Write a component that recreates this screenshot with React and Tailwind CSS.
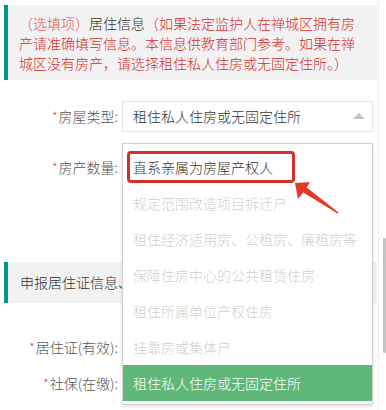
import React from "react";

const font = { fontFamily: '"Noto Sans CJK SC", "Noto Sans", sans-serif' };

const options = [
  { text: "直系亲属为房屋产权人", state: "normal" },
  { text: "规定范围改造项目拆迁户", state: "disabled" },
  { text: "租住经济适用房、公租房、廉租房等", state: "disabled" },
  { text: "保障住房中心的公共租赁住房", state: "disabled" },
  { text: "租住所属单位产权住房", state: "disabled" },
  { text: "挂靠房或集体户", state: "disabled" },
  { text: "租住私人住房或无固定住所", state: "selected" },
];

function Label({ children }) {
  return (
    <div className="w-[118px] shrink-0 text-right text-[14px] text-[#555] whitespace-nowrap">
      <span className="text-[#e4393c] text-[12px] mr-[1px] relative -top-[1px]">*</span>
      {children}
    </div>
  );
}

function Dropdown() {
  return (
    <div className="absolute left-0 top-[42px] w-[251px] h-[262px] border border-[#d2d2d2] bg-white shadow-[0_2px_4px_rgba(0,0,0,0.12)] pt-[5px] z-10">
      {options.map((o) => (
        <div
          key={o.text}
          className={
            o.state === "selected"
              ? "h-[36px] px-[10px] flex items-center bg-[#5fb878] text-white text-[14px]"
              : o.state === "disabled"
              ? "h-[36px] px-[10px] flex items-center text-[#d0d0d0] text-[14px]"
              : "h-[36px] px-[10px] flex items-center text-[#333] text-[14px]"
          }
        >
          {o.text}
        </div>
      ))}
      <div className="absolute left-[4px] top-[7px] w-[168px] h-[32px] border-[3px] border-[#cf3328] rounded-[4px]" />
    </div>
  );
}

export default function App() {
  return (
    <div className="relative w-[386px] h-[410px] overflow-hidden bg-white flex font-light" style={font}>
      <div className="w-[378px] shrink-0 pt-[5px]">
        <div className="ml-[4px] w-[373px] border-l-4 border-[#009688] bg-[#f2f2f2] pl-[11px] pr-[15px] pt-[8px] pb-[7px] text-[14px] leading-[20px]">
          <span className="text-[#e2544f]">（选填项）</span>
          <span className="text-[#333]">居住信息</span>
          <span className="text-[#d42f2f]">
            （如果法定监护人在禅城区拥有房产请准确填写信息。本信息供教育部门参考。如果在禅城区没有房产，请选择租住私人住房或无固定住所。）
          </span>
        </div>

        <div className="mt-[21px] flex items-center h-[31px]">
          <Label>房屋类型:</Label>
          <div className="relative ml-[4px] w-[251px] h-[31px]">
            <div className="h-full border border-[#e6e6e6] bg-white flex items-center pl-[10px] text-[14px] text-[#333]">
              租住私人住房或无固定住所
            </div>
            <div className="absolute right-[8px] top-[12px] w-0 h-0 border-l-[6px] border-r-[6px] border-b-[6px] border-l-transparent border-r-transparent border-b-[#c2c2c2]" />
            <Dropdown />
          </div>
        </div>

        <div className="mt-[20px] flex items-center h-[31px]">
          <Label>房产数量:</Label>
          <div className="ml-[4px] w-[251px] h-[31px] border border-[#e6e6e6] bg-white" />
        </div>

        <div className="mt-[79px] ml-[4px] w-[373px] h-[41px] border-l-4 border-[#009688] bg-[#f2f2f2] pl-[12px] flex items-center text-[14px] text-[#333] whitespace-nowrap">
          申报居住证信息、社保信息
        </div>

        <div className="mt-[28px] flex items-center h-[32px]">
          <Label>居住证(有效):</Label>
        </div>
        <div className="mt-[4px] flex items-center h-[32px]">
          <Label>社保(在缴):</Label>
        </div>
      </div>

      <div className="w-[8px] shrink-0 border-l border-[#ececec] bg-white pt-[238px]">
        <div className="ml-[4px] w-[3px] h-[115px] bg-[#c4c4c4] rounded-[1px]" />
      </div>

      <svg className="absolute left-0 top-0 z-20 pointer-events-none" width="386" height="410" viewBox="0 0 386 410">
        <polygon
          points="295,183 310,182 306.7,187.5 338.5,212.4 337.5,213.6 303.3,192.5 298,199"
          fill="#e5382c"
        />
      </svg>
    </div>
  );
}
